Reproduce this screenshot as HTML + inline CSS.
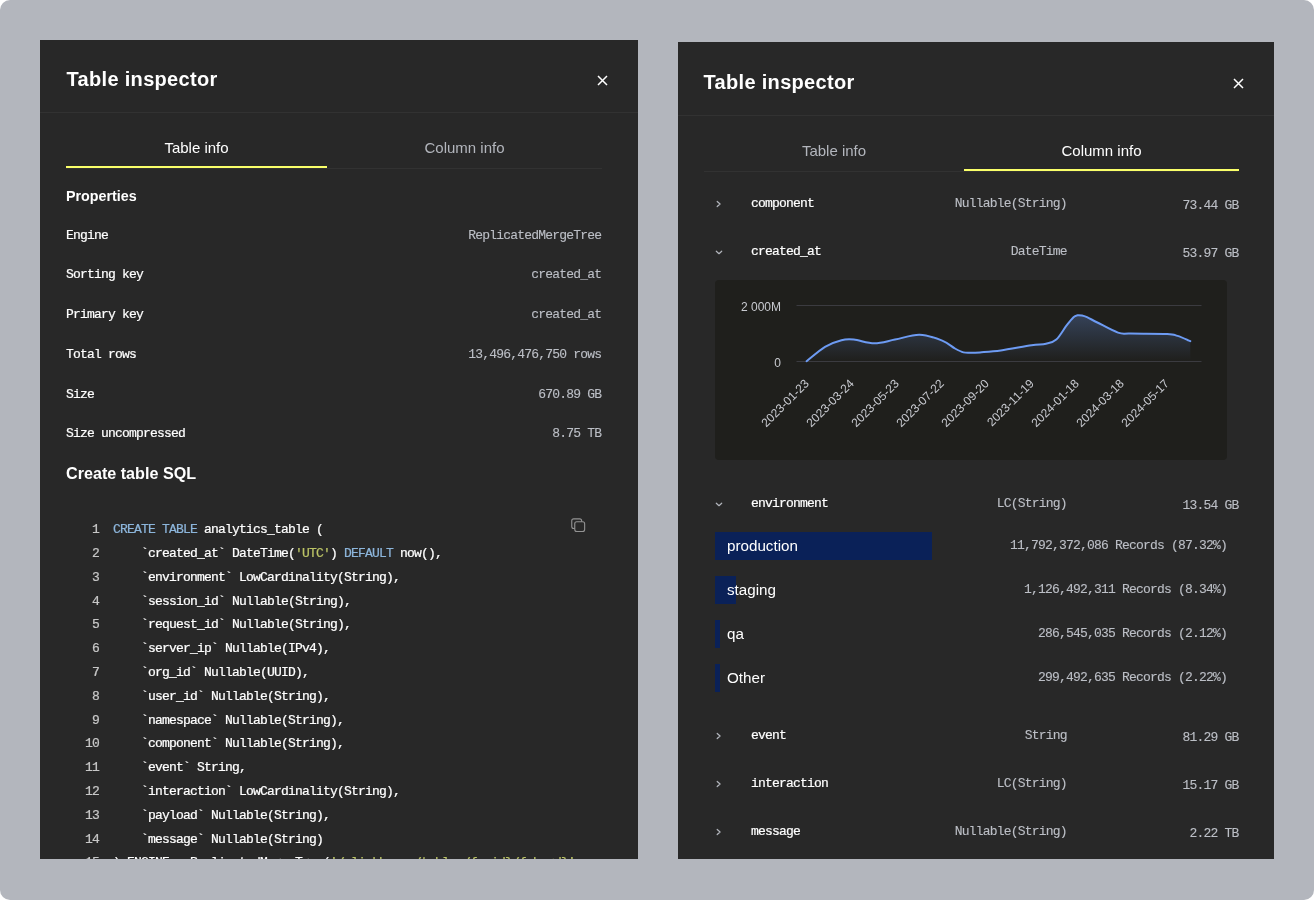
<!DOCTYPE html>
<html lang="en">
<head>
<meta charset="utf-8">
<title>Table inspector</title>
<style>
*{box-sizing:border-box;margin:0;padding:0}
html,body{width:1314px;height:900px;overflow:hidden;background:#fff}
body{font-family:"Liberation Sans",Arial,sans-serif;color:#fff;position:relative}
.stage{position:absolute;left:0;top:0;width:1314px;height:900px;background:#b3b6bd;border-radius:10px;overflow:hidden}
.panel{position:absolute;background:#282828;overflow:hidden;will-change:transform}
#p1{left:40px;top:40px;width:598px;height:819px}
#p2{left:678px;top:42px;width:596px;height:817px}
.hdr{height:73px;border-bottom:1px solid #323232;position:relative}
.hdr h1{position:absolute;left:26.5px;top:25px;font-size:20px;line-height:28px;font-weight:700;letter-spacing:0.32px;white-space:nowrap}
.hdr svg{position:absolute;right:30.5px;top:34.5px}
.body{padding:0 36px 0 26px}
.tabs{display:flex;height:56px;border-bottom:1px solid #323232;position:relative}
.tab{flex:none;width:275px;text-align:center;font-size:15px;line-height:20px;padding-top:25px;color:#b3b6bd;height:55px}
.tab.on{color:#fff;border-bottom:2px solid #faff69}
#p1 .tab.on{width:261px}
#p2 .tab:first-child{width:260px}
#p2 .hdr{height:74px}
#p2 .hdr h1{top:26px;left:25.5px}
#p2 .hdr svg{top:35.5px}
.mono{font-family:"Liberation Mono","DejaVu Sans Mono",monospace;font-size:13px;letter-spacing:-0.8px;-webkit-text-stroke-width:0.12px}
.col{display:flex;flex-direction:column;gap:16px;padding-top:16px}
h2{font-size:14.3px;line-height:21px;font-weight:700;position:relative;top:0.5px}
h3{font-size:16.15px;line-height:24px;font-weight:700}
.row{display:flex;justify-content:space-between;height:23.8px;line-height:23.8px;white-space:nowrap}
.row span{position:relative;top:1.5px}
.row .k{color:#fff;-webkit-text-stroke-width:0.2px}
.row .v{color:#bcbfc6;margin-right:0.8px}
.code{position:relative;padding:17.5px 0 16px 16px;line-height:23.8px;white-space:pre;color:#fff;-webkit-text-stroke-width:0.22px}
.code .ln{display:inline-block;width:17px;margin-right:14px;text-align:right;color:#c8c8c8}
.kw{color:#8db6dc}
.st{color:#bcc466}
.copy{position:absolute;left:505px;top:17.4px}

.cols{padding-top:7px}
.crow{position:relative;height:48px;line-height:48px;white-space:nowrap}
.crow .chev{position:absolute;left:11px;top:20px}
.crow .n{position:absolute;left:47px;top:1.2px;color:#fff;-webkit-text-stroke-width:0.2px}
.crow .t{position:absolute;right:171.2px;top:1.2px;color:#bcbfc6}
.crow .s{position:absolute;right:-0.4px;top:2.9px;color:#bcbfc6}
.chart{margin:5px 0 19px 11px;width:512px;height:180px;background:#1f1f1c;border-radius:4px}
.chart svg{display:block}
.bars{margin:5px 12px 19px 11px;display:flex;flex-direction:column;gap:16px}
.bar{position:relative;height:28px;line-height:28px}
.bar i{position:absolute;left:0;top:0;height:28px;background:#0a2158}
.bar b{position:absolute;left:12px;font-weight:400;font-size:15.2px}
.bar span{position:absolute;right:-1px;top:-0.5px;color:#bcbfc6}
</style>
</head>
<body>
<div class="stage">

<div class="panel" id="p1">
  <div class="hdr" style="height:73px">
    <h1>Table inspector</h1>
    <svg width="11" height="11" viewBox="0 0 11 11"><path d="M1 1L10 10M10 1L1 10" stroke="#fff" stroke-width="1.5" fill="none"/></svg>
  </div>
  <div class="body">
    <div class="tabs"><div class="tab on">Table info</div><div class="tab">Column info</div></div>
    <div class="col">
      <h2>Properties</h2>
      <div class="row mono"><span class="k">Engine</span><span class="v">ReplicatedMergeTree</span></div>
      <div class="row mono"><span class="k">Sorting key</span><span class="v">created_at</span></div>
      <div class="row mono"><span class="k">Primary key</span><span class="v">created_at</span></div>
      <div class="row mono"><span class="k">Total rows</span><span class="v">13,496,476,750 rows</span></div>
      <div class="row mono"><span class="k">Size</span><span class="v">670.89 GB</span></div>
      <div class="row mono"><span class="k">Size uncompressed</span><span class="v">8.75 TB</span></div>
      <h3>Create table SQL</h3>
      <div class="code mono"><svg class="copy" width="15" height="15" viewBox="0 0 15 15" fill="none" stroke="#939393" stroke-width="1.1"><rect x="0.75" y="0.85" width="9.9" height="9.7" rx="2"/><rect x="3.75" y="3.75" width="9.9" height="9.7" rx="2" fill="#282828"/></svg><span class="ln">1</span><span class="kw">CREATE TABLE</span> analytics_table (
<span class="ln">2</span>    `created_at` DateTime(<span class="st">'UTC'</span>) <span class="kw">DEFAULT</span> now(),
<span class="ln">3</span>    `environment` LowCardinality(String),
<span class="ln">4</span>    `session_id` Nullable(String),
<span class="ln">5</span>    `request_id` Nullable(String),
<span class="ln">6</span>    `server_ip` Nullable(IPv4),
<span class="ln">7</span>    `org_id` Nullable(UUID),
<span class="ln">8</span>    `user_id` Nullable(String),
<span class="ln">9</span>    `namespace` Nullable(String),
<span class="ln">10</span>    `component` Nullable(String),
<span class="ln">11</span>    `event` String,
<span class="ln">12</span>    `interaction` LowCardinality(String),
<span class="ln">13</span>    `payload` Nullable(String),
<span class="ln">14</span>    `message` Nullable(String)
<span class="ln">15</span>) ENGINE = ReplicatedMergeTree(<span class="st">'/clickhouse/tables/{uuid}/{shard}'</span>,
</div>
    </div>
  </div>
</div>

<div class="panel" id="p2">
  <div class="hdr">
    <h1>Table inspector</h1>
    <svg width="11" height="11" viewBox="0 0 11 11"><path d="M1 1L10 10M10 1L1 10" stroke="#fff" stroke-width="1.5" fill="none"/></svg>
  </div>
  <div class="body">
    <div class="tabs"><div class="tab">Table info</div><div class="tab on">Column info</div></div>
<div class="cols">
<div class="crow mono"><svg class="chev" width="8" height="10" viewBox="0 0 8 10"><path d="M2.2 2.5L5.1 5L2.2 7.5" stroke="#b3b6bd" stroke-width="1.2" fill="none" stroke-linecap="round" stroke-linejoin="round"/></svg><span class="n">component</span><span class="t">Nullable(String)</span><span class="s">73.44 GB</span></div>
<div class="crow mono"><svg class="chev" width="10" height="8" viewBox="0 0 10 8" style="left:10.2px;top:22.1px"><path d="M2.3 2.2L5 4.7L7.7 2.2" stroke="#b3b6bd" stroke-width="1.2" fill="none" stroke-linecap="round" stroke-linejoin="round"/></svg><span class="n">created_at</span><span class="t">DateTime</span><span class="s">53.97 GB</span></div>
<div class="chart"><svg width="512" height="180" viewBox="0 0 512 180" font-family="'Liberation Sans',Arial,sans-serif" font-size="12" fill="#c8cad0">
<defs><linearGradient id="g" x1="0" y1="0" x2="0" y2="1"><stop offset="0" stop-color="#6d9bf3" stop-opacity="0.28"/><stop offset="1" stop-color="#6d9bf3" stop-opacity="0"/></linearGradient></defs>
<path d="M81.5 25.5H486.5M81.5 81.5H486.5" stroke="#3b3b40" stroke-width="1"/>
<path d="M91.6 81.2C94.7 78.8 104.2 70.3 110.0 66.8C115.8 63.3 121.7 61.4 126.5 60.2C131.3 59.0 133.3 59.1 138.8 59.6C144.3 60.1 152.5 63.3 159.4 63.3C166.3 63.3 172.5 61.0 180.0 59.6C187.5 58.2 196.7 54.5 204.6 54.7C212.5 54.9 221.3 58.3 227.2 60.6C233.1 62.9 236.4 66.5 240.0 68.5C243.6 70.5 245.8 71.7 248.5 72.4C251.2 73.1 253.2 72.8 256.0 72.8C258.8 72.8 260.0 72.8 265.0 72.4C270.0 72.0 277.2 71.7 285.8 70.5C294.4 69.3 309.1 66.4 316.6 65.3C324.1 64.2 326.9 64.7 331.0 63.7C335.1 62.8 337.9 62.7 341.3 59.6C344.7 56.5 348.7 49.1 351.6 45.4C354.5 41.7 356.7 38.9 358.5 37.2C360.3 35.5 361.1 35.6 362.5 35.3C363.9 35.0 365.4 35.3 367.0 35.6C368.6 35.9 369.4 36.1 372.0 37.2C374.6 38.4 377.2 39.9 382.4 42.5C387.6 45.1 397.5 50.8 403.0 52.6C408.5 54.5 407.1 53.4 415.3 53.6C423.5 53.8 444.3 53.5 452.2 53.9C460.1 54.3 458.6 54.7 462.5 55.9C466.4 57.1 473.2 60.3 475.3 61.2 L475.3 81.5 L91.6 81.5Z" fill="url(#g)" transform="translate(0 0)"/>
<path d="M91.6 81.2C94.7 78.8 104.2 70.3 110.0 66.8C115.8 63.3 121.7 61.4 126.5 60.2C131.3 59.0 133.3 59.1 138.8 59.6C144.3 60.1 152.5 63.3 159.4 63.3C166.3 63.3 172.5 61.0 180.0 59.6C187.5 58.2 196.7 54.5 204.6 54.7C212.5 54.9 221.3 58.3 227.2 60.6C233.1 62.9 236.4 66.5 240.0 68.5C243.6 70.5 245.8 71.7 248.5 72.4C251.2 73.1 253.2 72.8 256.0 72.8C258.8 72.8 260.0 72.8 265.0 72.4C270.0 72.0 277.2 71.7 285.8 70.5C294.4 69.3 309.1 66.4 316.6 65.3C324.1 64.2 326.9 64.7 331.0 63.7C335.1 62.8 337.9 62.7 341.3 59.6C344.7 56.5 348.7 49.1 351.6 45.4C354.5 41.7 356.7 38.9 358.5 37.2C360.3 35.5 361.1 35.6 362.5 35.3C363.9 35.0 365.4 35.3 367.0 35.6C368.6 35.9 369.4 36.1 372.0 37.2C374.6 38.4 377.2 39.9 382.4 42.5C387.6 45.1 397.5 50.8 403.0 52.6C408.5 54.5 407.1 53.4 415.3 53.6C423.5 53.8 444.3 53.5 452.2 53.9C460.1 54.3 458.6 54.7 462.5 55.9C466.4 57.1 473.2 60.3 475.3 61.2" fill="none" stroke="#6d9bf3" stroke-width="2" stroke-linecap="round" stroke-linejoin="round"/>
<text x="66" y="30.5" text-anchor="end">2 000M</text>
<text x="66" y="86.7" text-anchor="end">0</text>
<text x="94.7" y="104.3" text-anchor="end" transform="rotate(-45 94.7 104.3)">2023-01-23</text>
<text x="139.7" y="104.3" text-anchor="end" transform="rotate(-45 139.7 104.3)">2023-03-24</text>
<text x="184.7" y="104.3" text-anchor="end" transform="rotate(-45 184.7 104.3)">2023-05-23</text>
<text x="229.7" y="104.3" text-anchor="end" transform="rotate(-45 229.7 104.3)">2023-07-22</text>
<text x="274.7" y="104.3" text-anchor="end" transform="rotate(-45 274.7 104.3)">2023-09-20</text>
<text x="319.7" y="104.3" text-anchor="end" transform="rotate(-45 319.7 104.3)">2023-11-19</text>
<text x="364.7" y="104.3" text-anchor="end" transform="rotate(-45 364.7 104.3)">2024-01-18</text>
<text x="409.7" y="104.3" text-anchor="end" transform="rotate(-45 409.7 104.3)">2024-03-18</text>
<text x="454.7" y="104.3" text-anchor="end" transform="rotate(-45 454.7 104.3)">2024-05-17</text>
</svg></div>
<div class="crow mono"><svg class="chev" width="10" height="8" viewBox="0 0 10 8" style="left:10.2px;top:22.1px"><path d="M2.3 2.2L5 4.7L7.7 2.2" stroke="#b3b6bd" stroke-width="1.2" fill="none" stroke-linecap="round" stroke-linejoin="round"/></svg><span class="n">environment</span><span class="t">LC(String)</span><span class="s">13.54 GB</span></div>
<div class="bars">
<div class="bar"><i style="width:217px"></i><b>production</b><span class="mono">11,792,372,086 Records (87.32%)</span></div>
<div class="bar"><i style="width:21px"></i><b>staging</b><span class="mono">1,126,492,311 Records (8.34%)</span></div>
<div class="bar"><i style="width:5px"></i><b>qa</b><span class="mono">286,545,035 Records (2.12%)</span></div>
<div class="bar"><i style="width:5px"></i><b>Other</b><span class="mono">299,492,635 Records (2.22%)</span></div>
</div>
<div class="crow mono"><svg class="chev" width="8" height="10" viewBox="0 0 8 10"><path d="M2.2 2.5L5.1 5L2.2 7.5" stroke="#b3b6bd" stroke-width="1.2" fill="none" stroke-linecap="round" stroke-linejoin="round"/></svg><span class="n">event</span><span class="t">String</span><span class="s">81.29 GB</span></div>
<div class="crow mono"><svg class="chev" width="8" height="10" viewBox="0 0 8 10"><path d="M2.2 2.5L5.1 5L2.2 7.5" stroke="#b3b6bd" stroke-width="1.2" fill="none" stroke-linecap="round" stroke-linejoin="round"/></svg><span class="n">interaction</span><span class="t">LC(String)</span><span class="s">15.17 GB</span></div>
<div class="crow mono"><svg class="chev" width="8" height="10" viewBox="0 0 8 10"><path d="M2.2 2.5L5.1 5L2.2 7.5" stroke="#b3b6bd" stroke-width="1.2" fill="none" stroke-linecap="round" stroke-linejoin="round"/></svg><span class="n">message</span><span class="t">Nullable(String)</span><span class="s">2.22 TB</span></div>
</div>
  </div>
</div>

</div>
</body>
</html>
